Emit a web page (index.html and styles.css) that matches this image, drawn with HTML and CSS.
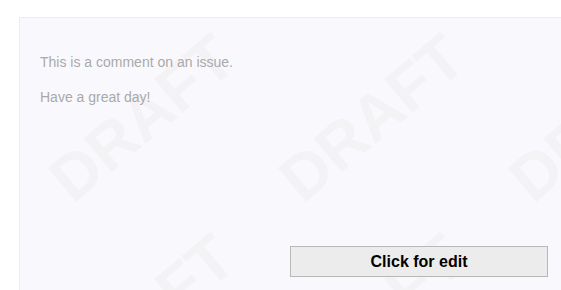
FILE: index.html
```html
<!DOCTYPE html>
<html lang="en">
<head>
  <meta charset="UTF-8" />
  <meta name="viewport" content="width=device-width, initial-scale=1.0" />
  <title>Comment</title>
  <link rel="stylesheet" href="styles.css">
</head>
<body>
  <div class="page">
    <!-- Comment card with the DRAFT watermark behind it -->
    <div class="card">
      <div class="watermark" aria-hidden="true">
        <span>DRAFT</span><span>DRAFT</span><span>DRAFT</span>
        <span>DRAFT</span><span>DRAFT</span><span>DRAFT</span>
      </div>
      <div class="comment">
        <p>This is a comment on an issue.</p>
        <p>Have a great day!</p>
      </div>
      <div class="actions">
        <button class="edit-btn">Click for edit</button>
      </div>
    </div>
  </div>
</body>
</html>
```

FILE: styles.css
```css
html, body {
  margin: 0;
  padding: 0;
  overflow: hidden;
  background: #ffffff;
  font-family: "Liberation Sans", Arial, sans-serif;
}

.page {
  padding: 17px 0 0 19px;
}

.card {
  position: relative;
  box-sizing: border-box;
  width: 550px;
  padding: 20px;
  background: #f9f9fd;
  border: 1px solid #ededf0;
  overflow: hidden;
}

/* watermark sits behind the card content */
.watermark {
  position: absolute;
  inset: 0;
  padding-left: 7px;
  display: grid;
  grid-template-columns: repeat(3, 230px);
  grid-auto-rows: 200px;
  pointer-events: none;
  z-index: 0;
}

.watermark span {
  display: flex;
  justify-content: center;
  align-items: center;
  transform: rotate(-40deg);
  font-size: 64px;
  font-weight: bold;
  color: #f3f3f5;
  white-space: nowrap;
}

.comment {
  position: relative;
  z-index: 1;
  display: flow-root;
  height: 208px;
}

.comment p {
  margin: 14px 0;
  font-size: 14px;
  line-height: 21px;
  color: #a9a9a9;
}

.actions {
  position: relative;
  z-index: 1;
  display: flex;
  justify-content: flex-end;
}

.edit-btn {
  width: 258px;
  height: 31px;
  background: #ececec;
  border: 1px solid #b8b8b8;
  border-radius: 0;
  font-family: "Liberation Sans", Arial, sans-serif;
  font-size: 16px;
  font-weight: bold;
  color: #000000;
  cursor: pointer;
}
```
